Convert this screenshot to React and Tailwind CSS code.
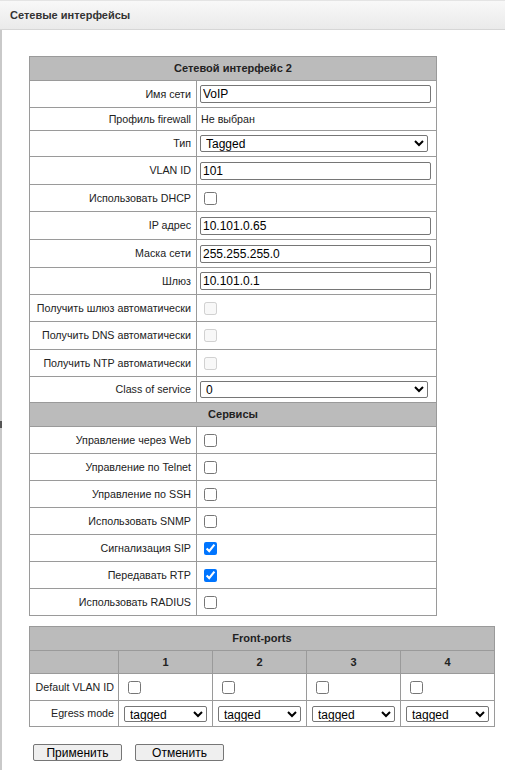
import { useState } from 'react'

const cell = 'border border-[#9a9a9a]'

const Row = ({ label, h, children }) => (
  <tr className={h}>
    <td className={`${cell} text-right pr-[5px] align-middle`}>{label}</td>
    <td className={`${cell} pl-[3px] align-middle`}>{children}</td>
  </tr>
)

const Head = ({ children, h = 'h-[24px]' }) => (
  <tr className={h}>
    <td colSpan={2} className={`${cell} bg-[#bbbbbb] text-center font-bold text-[11px]`}>
      {children}
    </td>
  </tr>
)

const TextBox = ({ value }) => (
  <input
    defaultValue={value}
    className="block w-[231px] h-[18px] border border-[#767676] rounded-[2px] bg-white px-[2px] text-[12px] text-black"
  />
)

const Box = ({ checked = false, disabled = false }) => (
  <input
    type="checkbox"
    defaultChecked={checked}
    disabled={disabled}
    className="block m-0 ml-[4px] w-[13px] h-[13px]"
  />
)

const Select = ({ options, w = 'w-[228px]', h = 'h-[17px]' }) => (
  <select
    defaultValue={options[0]}
    className={`block ${w} ${h} border border-[#767676] rounded-[2px] bg-white text-[12px] text-black pl-[1px]`}
  >
    {options.map((o) => (
      <option key={o}>{o}</option>
    ))}
  </select>
)

const services = [
  ['Управление через Web', false],
  ['Управление по Telnet', false],
  ['Управление по SSH', false],
  ['Использовать SNMP', false],
  ['Сигнализация SIP', true],
  ['Передавать RTP', true],
  ['Использовать RADIUS', false],
]

export default function App() {
  const [ports] = useState([1, 2, 3, 4])

  return (
    <div className="relative min-h-[770px] bg-white text-[#222] text-[10.7px] leading-[13px] font-['Liberation_Sans',Arial,sans-serif]">
      {/* title bar */}
      <div className="h-[30px] border-t border-b border-t-[#e4e4e4] border-b-[#d6d6d6] bg-linear-to-b from-[#f8f8f8] to-[#eaeaea] flex items-center pl-[10px]">
        <span className="text-[11px] font-bold text-[#333]">Сетевые интерфейсы</span>
      </div>

      <div className="border-l-2 border-[#c9c9c9] min-h-[740px] pl-[27px] pt-[26px]">
        <table className="border-collapse table-fixed w-[408px]">
          <colgroup>
            <col className="w-[167px]" />
            <col />
          </colgroup>
          <tbody>
            <Head>Сетевой интерфейс 2</Head>
            <Row label="Имя сети" h="h-[27px]">
              <TextBox value="VoIP" />
            </Row>
            <Row label="Профиль firewall" h="h-[23px]">
              <span className="pl-[1px]">Не выбран</span>
            </Row>
            <Row label="Тип" h="h-[26px]">
              <Select options={['Tagged', 'Untagged']} />
            </Row>
            <Row label="VLAN ID" h="h-[28px]">
              <TextBox value="101" />
            </Row>
            <Row label="Использовать DHCP" h="h-[27px]">
              <Box />
            </Row>
            <Row label="IP адрес" h="h-[28px]">
              <TextBox value="10.101.0.65" />
            </Row>
            <Row label="Маска сети" h="h-[28px]">
              <TextBox value="255.255.255.0" />
            </Row>
            <Row label="Шлюз" h="h-[27px]">
              <TextBox value="10.101.0.1" />
            </Row>
            <Row label="Получить шлюз автоматически" h="h-[27px]">
              <Box disabled />
            </Row>
            <Row label="Получить DNS автоматически" h="h-[28px]">
              <Box disabled />
            </Row>
            <Row label="Получить NTP автоматически" h="h-[27px]">
              <Box disabled />
            </Row>
            <Row label="Class of service" h="h-[26px]">
              <Select options={['0', '1', '2', '3', '4', '5', '6', '7']} />
            </Row>
            <Head>Сервисы</Head>
            {services.map(([label, on]) => (
              <Row key={label} label={label} h="h-[27px]">
                <Box checked={on} />
              </Row>
            ))}
          </tbody>
        </table>

        {/* front ports */}
        <table className="border-collapse table-fixed w-[466px] mt-[10px]">
          <colgroup>
            <col className="w-[89px]" />
            <col className="w-[94px]" />
            <col className="w-[94px]" />
            <col className="w-[94px]" />
            <col />
          </colgroup>
          <tbody>
            <tr className="h-[24px]">
              <td colSpan={5} className={`${cell} bg-[#bbbbbb] text-center font-bold text-[11px]`}>
                Front-ports
              </td>
            </tr>
            <tr className="h-[23px]">
              <td className={`${cell} bg-[#bbbbbb]`}></td>
              {ports.map((p) => (
                <td key={p} className={`${cell} bg-[#bbbbbb] text-center font-bold text-[11px]`}>
                  {p}
                </td>
              ))}
            </tr>
            <tr className="h-[27px]">
              <td className={`${cell} text-right pr-[4px]`}>Default VLAN ID</td>
              {ports.map((p) => (
                <td key={p} className={`${cell} pl-[5px]`}>
                  <Box />
                </td>
              ))}
            </tr>
            <tr className="h-[26px]">
              <td className={`${cell} text-right pr-[4px]`}>Egress mode</td>
              {ports.map((p) => (
                <td key={p} className={`${cell} pl-[5px]`}>
                  <Select options={['tagged', 'untagged']} w="w-[83px]" h="h-[16px]" />
                </td>
              ))}
            </tr>
          </tbody>
        </table>

        <div className="flex gap-[13px] mt-[17px] pl-[4px]">
          <button className="w-[89px] h-[17px] border border-[#767676] rounded-[2px] bg-[#efefef] text-[12px] text-black leading-none">
            Применить
          </button>
          <button className="w-[89px] h-[17px] border border-[#767676] rounded-[2px] bg-[#efefef] text-[12px] text-black leading-none">
            Отменить
          </button>
        </div>
      </div>

      {/* clipped glyph at the left edge */}
      <span className="absolute left-0 top-[421px] w-[2px] h-[7px] bg-[#555]" />
    </div>
  )
}
